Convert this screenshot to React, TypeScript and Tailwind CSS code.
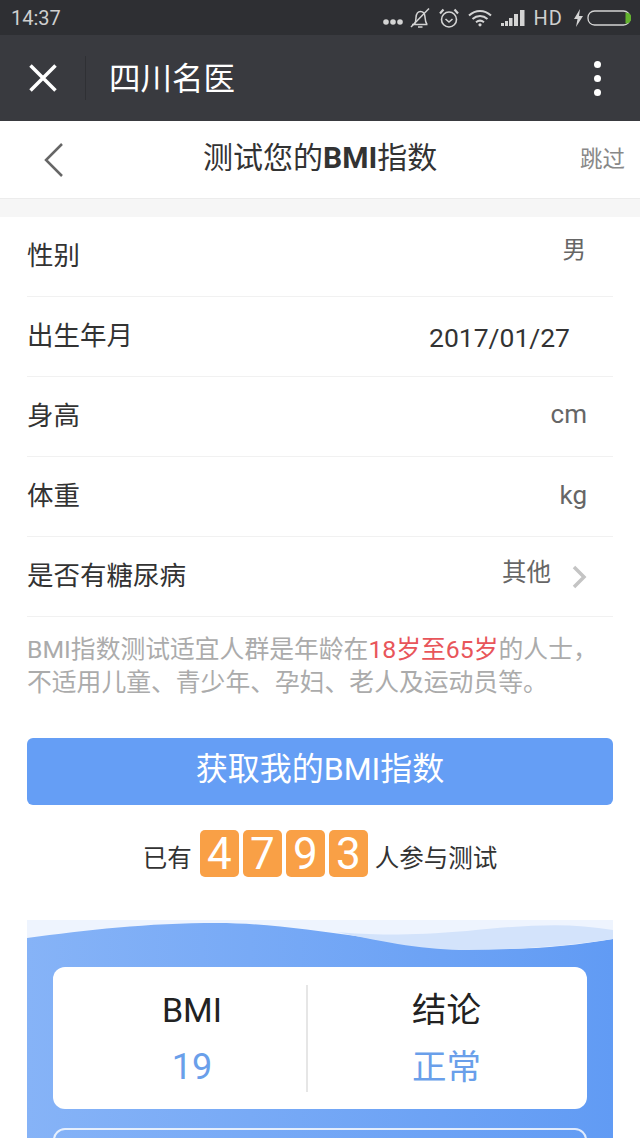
import React from "react";

function StatusIcons() {
  return (
    <div className="flex items-center">
      <svg width="20" height="6" viewBox="0 0 20 6" className="mt-[9px]" fill="#d4d4d4">
        <circle cx="3" cy="3" r="2.800" /><circle cx="10" cy="3" r="2.800" /><circle cx="17" cy="3" r="2.800" />
      </svg>
      <svg width="22" height="22" viewBox="0 0 22 22" className="ml-[6px]" fill="none" stroke="#d4d4d4" strokeWidth="1.500">
        <path d="M3 17.500h15.500M5.500 17c1.500-2 1.300-4 1.500-6.500C7.300 7 9 4.500 11.500 4.500c2.700 0 4.300 2.500 4.500 5.500.2 3 .3 5 2 7.500" />
        <path d="M9 20h4.500" /><path d="M2 20L20 1.500" />
      </svg>
      <svg width="22" height="22" viewBox="0 0 22 22" className="ml-[7px]" fill="none" stroke="#d4d4d4" strokeWidth="1.600">
        <circle cx="11" cy="12.500" r="7.500" /><path d="M7.500 12l3.500 3 3.500-3" />
        <path d="M2 6.500L5.500 2.500M20 6.500L16.500 2.500" strokeWidth="2.200" />
      </svg>
      <svg width="24" height="18" viewBox="0 0 24 18" className="ml-[8px]" fill="none" stroke="#d4d4d4" strokeWidth="2">
        <path d="M1 6.500C7.500 .5 16.500 .5 23 6.500M4.500 10c4.500-4 10.500-4 15 0M8 13.200c2.500-2 5.500-2 8 0" />
        <circle cx="12" cy="15.800" r="1.600" fill="#d4d4d4" stroke="none" />
      </svg>
      <svg width="24" height="17" viewBox="0 0 24 17" className="ml-[9px]" fill="#d4d4d4">
        <rect x="0" y="14" width="3" height="3" /><rect x="4" y="12" width="3" height="5" /><rect x="8" y="9" width="3.500" height="8" />
        <rect x="13" y="5" width="4" height="12" /><rect x="19" y="1" width="4.500" height="16" />
      </svg>
      <span className="ml-[9px] text-[20px] leading-none tracking-[1px] text-[#cfcfcf]">HD</span>
      <svg width="11" height="18" viewBox="0 0 11 18" className="ml-[10px]" fill="#d4d4d4"><path d="M7 0L1 10h3.500L3 18l7-11H6z" /></svg>
      <svg width="44" height="16" viewBox="0 0 44 16" className="ml-[3px]" fill="none">
        <rect x="1" y="1" width="42" height="14" rx="6.500" stroke="#d4d4d4" strokeWidth="1.300" />
        <path d="M38.500 2.500h.5a5.500 5.500 0 0 1 0 11h-.5z" fill="#63b32e" />
      </svg>
    </div>
  );
}

function Row({ label, children }: { label: string; children: React.ReactNode }) {
  return (
    <div className="flex h-[80px] items-center justify-between border-b border-[#f1f1f1]">
      <span className="text-[26.500px] leading-none text-[#333333]">{label}</span>
      {children}
    </div>
  );
}

export default function App() {
  return (
    <div className="relative h-[1138px] w-[640px] overflow-hidden bg-white [font-family:Roboto,'Noto_Sans_CJK_SC',sans-serif]">
      <div className="flex h-[35px] items-center justify-between bg-[#2e2f33] pl-[11px] pr-[9px]">
        <span className="text-[20px] leading-none text-[#cfcfcf]">14:37</span>
        <StatusIcons />
      </div>

      <div className="flex h-[86px] items-center bg-[#393a3f] pl-[29px] pr-[39px]">
        <svg width="28" height="28" viewBox="0 0 28 28" fill="none" stroke="#ffffff" strokeWidth="3.500" className="shrink-0">
          <path d="M1.500 1.500L26.500 26.500M26.500 1.500L1.500 26.500" />
        </svg>
        <div className="ml-[28px] h-[44px] w-px bg-[#2f3034]" />
        <span className="ml-[23px] mt-[3px] flex-1 text-[31.500px] leading-none text-white">四川名医</span>
        <div className="flex flex-col gap-[7px]">
          <div className="h-[7px] w-[7px] rounded-full bg-white" />
          <div className="h-[7px] w-[7px] rounded-full bg-white" />
          <div className="h-[7px] w-[7px] rounded-full bg-white" />
        </div>
      </div>

      <div className="relative flex h-[78px] items-center justify-between border-b border-[#ececec] pl-[44px] pr-[15px]">
        <svg width="20" height="34" viewBox="0 0 20 34" fill="none" stroke="#666666" strokeWidth="2.500">
          <path d="M18 1L2 17L18 33" />
        </svg>
        <span className="absolute left-[203px] top-[19px] text-[30px] leading-[36px] text-[#333333]">
          测试您的<span className="font-bold">BMI</span>指数
        </span>
        <span className="text-[22.500px] leading-none text-[#888888]">跳过</span>
      </div>

      <div className="h-[18px] bg-[#f6f6f6]" />

      <div className="px-[27px]">
        <div className="flex h-[80px] items-center justify-between border-b border-[#f1f1f1]">
          <span className="text-[26.500px] leading-none text-[#333333]">性别</span>
          <span className="mb-[12px] mr-[27px] text-[23.500px] leading-none text-[#666666]">男</span>
        </div>
        <Row label="出生年月">
          <span className="mr-[43px] mt-[3px] text-[26.500px] leading-none text-[#333333]">2017/01/27</span>
        </Row>
        <Row label="身高">
          <span className="mr-[26px] mb-[6px] text-[26px] leading-none text-[#666666]">cm</span>
        </Row>
        <Row label="体重">
          <span className="mr-[26px] mb-[4px] text-[26px] leading-none text-[#666666]">kg</span>
        </Row>
        <Row label="是否有糖尿病">
          <div className="flex items-center">
            <span className="mb-[6px] text-[24.500px] leading-none text-[#666666]">其他</span>
            <svg width="16" height="24" viewBox="0 0 16 24" fill="none" stroke="#c4c4c4" strokeWidth="3.500" className="ml-[20px] mr-[26px]">
              <path d="M3 2L13 12L3 22" />
            </svg>
          </div>
        </Row>

        <p className="mt-[16px] whitespace-nowrap text-[24.800px] leading-[33px] text-[#ababab]">
          BMI指数测试适宜人群是年龄在<span className="text-[#e8555a]">18岁至65岁</span>的人士，
          <br />
          不适用儿童、青少年、孕妇、老人及运动员等。
        </p>

        <div className="mt-[39px] flex h-[67px] items-center justify-center rounded-[6px] bg-[#659ef5] pb-[5px] text-[32px] leading-none text-white">
          获取我的BMI指数
        </div>

        <div className="mt-[25px] flex h-[47px] items-center justify-center text-[24.500px] leading-none text-[#333333]">
          <span className="mt-[12px]">已有</span>
          <div className="ml-[8px] flex gap-[4px]">
            {["4", "7", "9", "3"].map((d) => (
              <div key={d} className="flex h-[47px] w-[39px] items-center justify-center rounded-[5px] bg-[#f9a046] text-[44px] leading-none text-white">
                {d}
              </div>
            ))}
          </div>
          <span className="ml-[7px] mt-[12px]">人参与测试</span>
        </div>

        <div className="relative mt-[43px] h-[300px] bg-gradient-to-r from-[#86b3f7] to-[#619bf4] px-[26px] pt-[47px]">
          <svg className="absolute left-0 top-0" width="586" height="32" viewBox="0 0 586 32" preserveAspectRatio="none">
            <path d="M0 0H586V19C540 27 490 31 430 28C360 24 270 3 190 3C120 3 60 10 0 18Z" fill="#eef4fe" />
            <path d="M586 10C540 2 500 5 440 11C380 16 340 15 310 12C360 23 400 30 440 30C490 30 540 26 586 19Z" fill="#d3e3fb" />
          </svg>
          <div className="relative flex h-[142px] items-center rounded-[12px] bg-white">
            <div className="flex w-[253px] flex-col items-center pl-[25px]">
              <span className="text-[34px] leading-[40px] text-[#222222]">BMI</span>
              <span className="mt-[17px] text-[36px] leading-[40px] text-[#6a9fea]">19</span>
            </div>
            <div className="h-[107px] w-[2px] bg-[#e6e6e6]" />
            <div className="flex flex-1 flex-col items-center pr-[2px]">
              <span className="text-[34.500px] leading-[40px] text-[#222222]">结论</span>
              <span className="mt-[17px] text-[34.500px] leading-[40px] text-[#6a9fea]">正常</span>
            </div>
          </div>
          <div className="mt-[19px] h-[60px] rounded-[12px] border-2 border-white/80" />
        </div>
      </div>
    </div>
  );
}
